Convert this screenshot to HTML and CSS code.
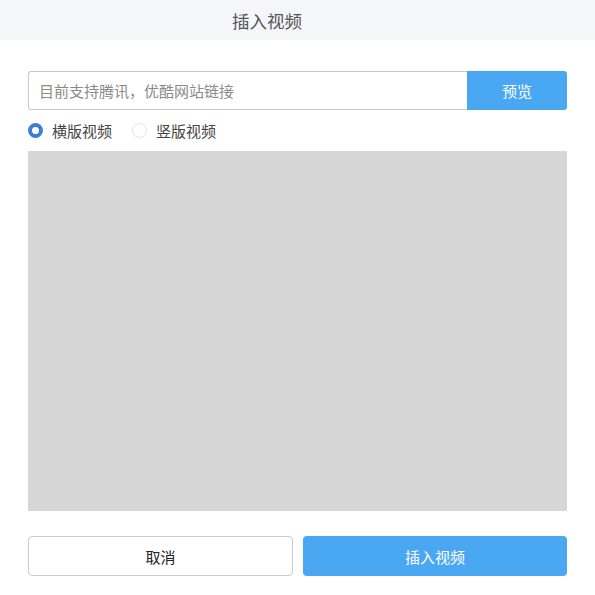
FILE: index.html
```html
<!DOCTYPE html>
<html lang="zh">
<head>
<meta charset="utf-8">
<link rel="stylesheet" href="styles.css">
</head>
<body>
<div class="dialog">
  <div class="header"><span class="title">插入视频</span></div>
  <div class="body">
    <div class="url-row">
      <input class="url-input" type="text" placeholder="目前支持腾讯，优酷网站链接">
      <button class="preview-btn">预览</button>
    </div>
    <div class="radio-row">
      <label class="radio"><span class="dot checked"></span><span class="label">横版视频</span></label>
      <label class="radio"><span class="dot"></span><span class="label">竖版视频</span></label>
    </div>
    <div class="preview-area"></div>
    <div class="actions">
      <button class="btn cancel">取消</button>
      <button class="btn primary">插入视频</button>
    </div>
  </div>
</div>
</body>
</html>
```

FILE: styles.css
```css
* { box-sizing: border-box; }
html, body { margin: 0; padding: 0; background: #fff; }
body { font-family: "Noto Sans CJK SC", "Noto Sans", sans-serif; width: 595px; }
.dialog { width: 595px; }
.header {
  height: 40px;
  background: #f5f6fa;
  display: flex;
  align-items: center;
  padding-left: 232px;
}
.title { font-size: 17.5px; color: #555; }
.body { padding: 31px 28px 0 28px; }
.url-row { display: flex; height: 39px; }
.url-input {
  flex: 1;
  border: 1px solid #c8c8c8;
  border-right: none;
  border-radius: 3px 0 0 3px;
  padding: 0 10px;
  font-family: inherit;
  font-size: 15px;
  color: #333;
  outline: none;
}
.url-input::placeholder { color: #8a8a8a; }
.preview-btn {
  width: 100px;
  border: none;
  background: #4aa8f2;
  color: #fff;
  border-radius: 0 3px 3px 0;
  font-family: inherit;
  font-size: 15px;
}
.radio-row { display: flex; align-items: center; gap: 20px; height: 41px; }
.radio { display: flex; align-items: center; gap: 9px; font-size: 15px; color: #444; }
.dot {
  width: 15px; height: 15px; border-radius: 50%;
  border: 1px solid #e2e2e2;
  background: #fff;
  display: block;
}
.dot.checked { border: 4px solid #3d7fd6; }
.preview-area { height: 360px; background: #d6d6d6; }
.actions { display: flex; gap: 10px; margin-top: 25px; }
.btn {
  height: 40px;
  border-radius: 4px;
  font-family: inherit;
  font-size: 15px;
}
.cancel { width: 265px; border: 1px solid #c9ccd2; background: #fff; color: #222; }
.primary { flex: 1; border: none; background: #4aa8f2; color: #fff; }
```
